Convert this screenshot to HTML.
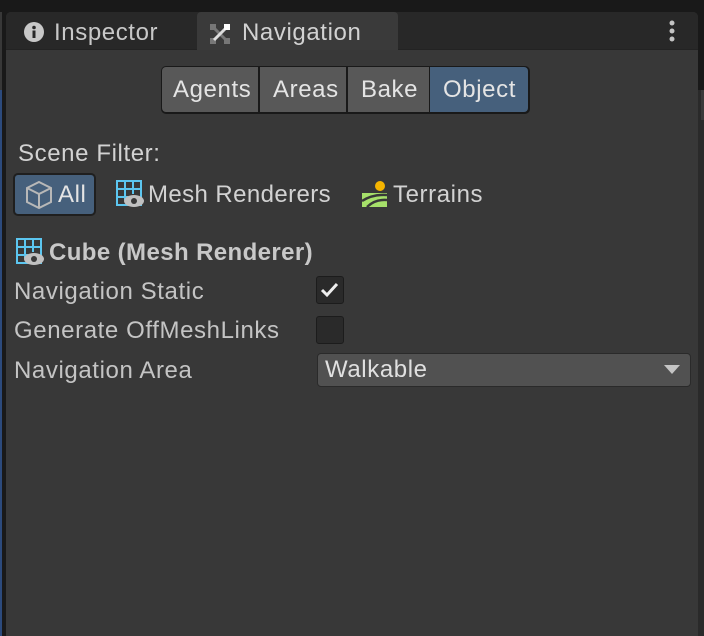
<!DOCTYPE html>
<html><head><style>
*{margin:0;padding:0;box-sizing:border-box}
body{width:704px;height:636px;background:#191919;position:relative;overflow:hidden;font-family:"Liberation Sans",sans-serif;font-size:24px;letter-spacing:0.6px;color:#d2d2d2}
.a{position:absolute}
.t{position:absolute;white-space:nowrap;line-height:1}
</style></head><body>
<div class="a" style="left:0;top:12px;width:2px;height:78px;background:#383838"></div>
<div class="a" style="left:0;top:90px;width:2px;height:546px;background:#2c4a7c"></div>
<div class="a" style="left:698px;top:90px;width:6px;height:546px;background:#2a2a2a"></div>
<div class="a" style="left:701px;top:90px;width:3px;height:30px;background:#3a3a3a"></div>
<div class="a" style="left:6px;top:12px;width:692px;height:624px;background:#383838;border-radius:5px 5px 0 0"></div>
<div class="a" style="left:6px;top:12px;width:692px;height:38px;background:#282828;border-radius:5px 5px 0 0"></div>
<div class="a" style="left:6px;top:49px;width:692px;height:1px;background:#232323"></div>
<div class="a" style="left:197px;top:12px;width:201px;height:38px;background:#3a3a3a;border-radius:4px 4px 0 0"></div>
<svg class="a" style="left:24px;top:22px" width="20" height="20"><circle cx="10" cy="10" r="10" fill="#c8c8c8"/><circle cx="10" cy="5.5" r="1.8" fill="#282828"/><rect x="8.5" y="8.5" width="3" height="7.5" fill="#282828"/></svg>
<div class="t" style="left:54px;top:21px;color:#c8c8c8">Inspector</div>
<svg class="a" style="left:210px;top:24px" width="20" height="20"><g fill="#777"><rect x="0" y="0" width="6" height="6"/><rect x="0" y="14" width="6" height="6"/><rect x="14" y="14" width="6" height="6"/></g><path d="M4 4L16 16" stroke="#777" stroke-width="3"/><path d="M4 16L16 4" stroke="#ddd" stroke-width="3"/><rect x="14" y="0" width="6" height="6" fill="#fff"/></svg>
<div class="t" style="left:242px;top:21px;color:#d2d2d2">Navigation</div>
<svg class="a" style="left:667px;top:20px" width="10" height="22"><g fill="#c4c4c4"><circle cx="5" cy="3" r="2.5"/><circle cx="5" cy="11" r="2.5"/><circle cx="5" cy="19" r="2.5"/></g></svg>
<div class="a" style="left:161px;top:66px;width:369px;height:48px;background:#191919;border-radius:5px"></div>
<div class="a" style="left:162px;top:67px;width:96px;height:45px;background:#585858;border-radius:4px 0 0 4px"></div>
<div class="a" style="left:260px;top:67px;width:86px;height:45px;background:#585858"></div>
<div class="a" style="left:348px;top:67px;width:81px;height:45px;background:#585858"></div>
<div class="a" style="left:430px;top:67px;width:98px;height:45px;background:#46607c;border-radius:0 4px 4px 0"></div>
<div class="t" style="left:173px;top:78px;color:#e4e4e4">Agents</div>
<div class="t" style="left:273px;top:78px;color:#e4e4e4">Areas</div>
<div class="t" style="left:361px;top:78px;color:#e4e4e4">Bake</div>
<div class="t" style="left:443px;top:78px;color:#e4e4e4">Object</div>
<div class="t" style="left:18px;top:142px">Scene Filter:</div>
<div class="a" style="left:13px;top:173px;width:83px;height:43px;background:#46607c;border:2px solid #1f1f1f;border-radius:5px"></div>
<svg class="a" style="left:25px;top:180px" width="28" height="30" fill="none" stroke="#b8b8b8" stroke-width="2"><path d="M14 2L26 8V22L14 28L2 22V8Z M2 8L14 14L26 8 M14 14V28"/></svg>
<div class="t" style="left:58px;top:183px;color:#e4e4e4">All</div>
<svg class="a" style="left:116px;top:180px" width="28" height="28"><g stroke="#5cc6f0" stroke-width="2" fill="none"><rect x="1" y="1" width="24" height="24"/><path d="M9 1V20M17 1V14M1 9H25M1 17H12"/></g><ellipse cx="18" cy="21" rx="10" ry="6" fill="#c0c0c0"/><circle cx="18" cy="21" r="3" fill="#383838"/></svg>
<div class="t" style="left:148px;top:183px;letter-spacing:0.4px">Mesh Renderers</div>
<svg class="a" style="left:361px;top:181px" width="26" height="26"><circle cx="19" cy="5" r="5" fill="#f5b400"/><path d="M1 12H26V26H1Z" fill="#a6e06a"/><path d="M1 20Q12 13 26 14 M6 26Q14 18 26 19" stroke="#383838" stroke-width="2.5" fill="none"/></svg>
<div class="t" style="left:393px;top:183px">Terrains</div>
<svg class="a" style="left:16px;top:238px" width="28" height="28"><g stroke="#5cc6f0" stroke-width="2" fill="none"><rect x="1" y="1" width="24" height="24"/><path d="M9 1V20M17 1V14M1 9H25M1 17H12"/></g><ellipse cx="18" cy="21" rx="10" ry="6" fill="#c0c0c0"/><circle cx="18" cy="21" r="3" fill="#383838"/></svg>
<div class="t" style="left:49px;top:241px;font-weight:bold;color:#c8c8c8;letter-spacing:0.4px">Cube (Mesh Renderer)</div>
<div class="t" style="left:14px;top:280px;color:#c4c4c4">Navigation Static</div>
<div class="t" style="left:14px;top:319px;color:#c4c4c4">Generate OffMeshLinks</div>
<div class="t" style="left:14px;top:359px;color:#c4c4c4">Navigation Area</div>
<div class="a" style="left:316px;top:276px;width:28px;height:28px;background:#2a2a2a;border:1px solid #1c1c1c;border-radius:3px"></div>
<svg class="a" style="left:320px;top:281px" width="20" height="18"><path d="M2 9L7 14L17 3" stroke="#eee" stroke-width="3" fill="none"/></svg>
<div class="a" style="left:316px;top:316px;width:28px;height:28px;background:#2a2a2a;border:1px solid #1c1c1c;border-radius:3px"></div>
<div class="a" style="left:317px;top:353px;width:374px;height:34px;background:#515151;border:1px solid #2a2a2a;border-radius:4px"></div>
<div class="t" style="left:325px;top:358px;color:#e0e0e0">Walkable</div>
<svg class="a" style="left:664px;top:365px" width="16" height="10"><path d="M0 0H16L8 9Z" fill="#c4c4c4"/></svg>
</body></html>
